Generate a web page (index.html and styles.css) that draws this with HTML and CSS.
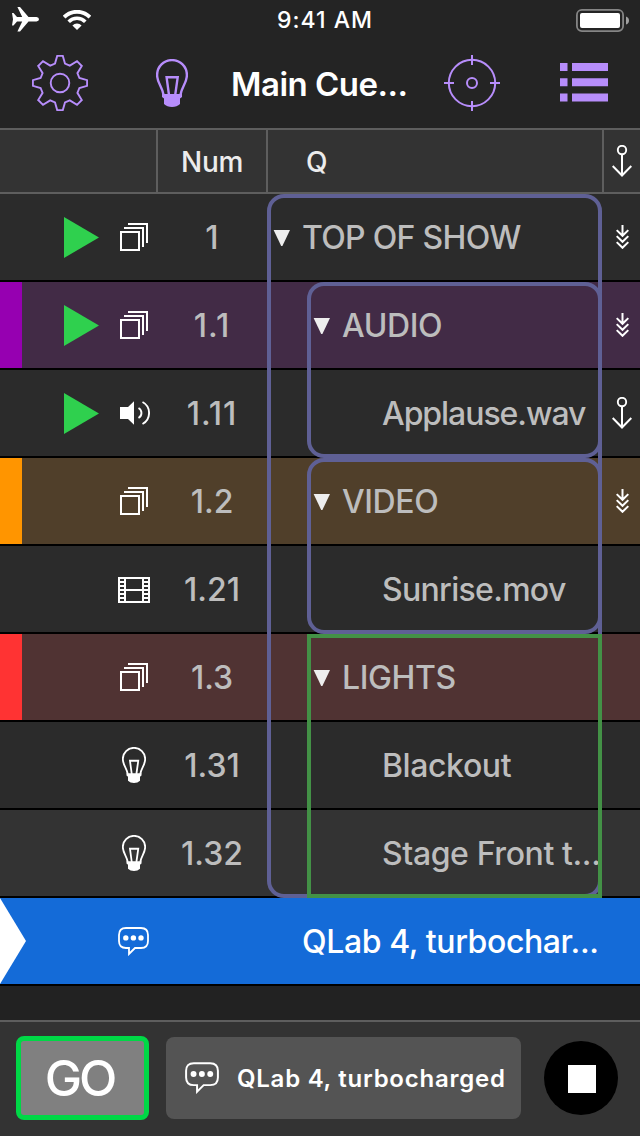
FILE: index.html
```
<!DOCTYPE html>
<html lang="en">
<head>
    <meta charset="utf-8">
    <title>Main Cue List</title>
    <link rel="stylesheet" href="styles.css">
</head>
<body>
    <!-- Icon shapes -->
    <svg class="icon-defs" width="0" height="0">
        <symbol id="icon-bulb" viewBox="0 0 32 48">
            <path d="M7.6 36C6.4 28 1.1 24 1.1 16a14.9 14.9 0 0 1 29.8 0C30.9 24 25.6 28 24.4 36" fill="none" stroke="currentColor" stroke-width="2.4"/>
            <path d="M13 36 10.6 18.3H21.7L19.2 36" fill="none" stroke="currentColor" stroke-width="2.4"/>
            <path d="M6 35h20v3l-2 1.5v5.5q-3 3-8 3t-8-3v-5.5l-2-1.5z" fill="currentColor"/>
        </symbol>
        <symbol id="icon-group" viewBox="0 0 28 28">
            <path d="M1 9h18v18H1zM4 5h19v19M8 1h19v19" fill="none" stroke="currentColor" stroke-width="2"/>
        </symbol>
        <symbol id="icon-audio" viewBox="0 0 30 24">
            <path d="M0 6h8l6-5.7v23.4L8 18H0z" fill="currentColor"/>
            <path d="M18.5 7a5.7 5.7 0 0 1 0 10M22.5 1a12.5 12.5 0 0 1 0 22" fill="none" stroke="currentColor" stroke-width="1.9"/>
        </symbol>
        <symbol id="icon-video" viewBox="0 0 32 26">
            <path d="M1 1h30v24H1zM7 1v24M25 1v24M7 13h18M2 5h4M2 9h4M2 13h4M2 17h4M2 21h4M26 5h4M26 9h4M26 13h4M26 17h4M26 21h4" fill="none" stroke="currentColor" stroke-width="2"/>
        </symbol>
        <symbol id="icon-memo" viewBox="0 0 31 29">
            <path d="M8 1h15q7 0 7 7v6q0 7-7 7h-6l-6 6v-6H8q-7 0-7-7V8q0-7 7-7z" fill="none" stroke="currentColor" stroke-width="1.8"/>
            <circle cx="7.8" cy="10.9" r="2.7" fill="currentColor"/>
            <circle cx="15.4" cy="10.9" r="2.7" fill="currentColor"/>
            <circle cx="23" cy="10.9" r="2.7" fill="currentColor"/>
        </symbol>
        <symbol id="icon-continue" viewBox="0 0 20 32">
            <path d="M10 9v21M.7 21l9.3 9.5 9.3-9.5" fill="none" stroke="currentColor" stroke-width="2"/>
            <circle cx="10" cy="5" r="4.2" fill="none" stroke="currentColor" stroke-width="1.9"/>
        </symbol>
        <symbol id="icon-follow" viewBox="0 0 13 24">
            <path d="M6.5 0v11M.7 5.1l5.8 5.7 5.8-5.7M.7 11.1l5.8 5.7 5.8-5.7M.7 17.1l5.8 5.7 5.8-5.7" fill="none" stroke="currentColor" stroke-width="2"/>
        </symbol>
        <symbol id="icon-play" viewBox="0 0 35 41">
            <path d="M0 0l35 20.5L0 41z" fill="currentColor"/>
        </symbol>
        <symbol id="icon-open" viewBox="0 0 17 16">
            <path d="M.6 0H17L9.4 16H8.200z" fill="currentColor"/>
        </symbol>
    </svg>

    <div class="status-bar">
        <div class="status-left">
            <svg width="27" height="25" viewBox="0 0 27 25" fill="#fff">
                <path d="M0 6h1.5L5 10h5.2L5.4 0H8l8.5 10h8q2.5.4 2.5 2.3t-2.5 2.3h-8L8 24.6H5.4L10.2 14.6H5l-3.5 4H0l1-6.3z"/>
            </svg>
            <svg width="28" height="20" viewBox="0 0 28 20" fill="none" stroke="#fff">
                <path d="M1.1 7.1a18.2 18.2 0 0 1 25.8 0" stroke-width="3.8"/>
                <path d="M5.7 11.7a11.7 11.7 0 0 1 16.6 0" stroke-width="3.6"/>
                <path d="M14 20l-4.6-4.6a6.5 6.5 0 0 1 9.2 0z" fill="#fff" stroke="none"/>
            </svg>
        </div>
        <span class="status-time">9:41 AM</span>
        <svg class="battery" width="53" height="23" viewBox="0 0 53 23">
            <rect x=".9" y=".9" width="46.2" height="21.2" rx="5" fill="none" stroke="#858585" stroke-width="1.8"/>
            <rect x="4" y="4" width="40" height="15" rx="2" fill="#fff"/>
            <path d="M50 7.5q3 1 3 4t-3 4z" fill="#a0a0a0"/>
        </svg>
    </div>

    <div class="nav-bar">
        <svg class="nav-gear" width="56" height="56" viewBox="0 0 56 56" fill="none" stroke="currentColor" stroke-width="1.9">
            <path d="M25.2.9h5.6L33 8.6l4.8 2L45 6.2 49.8 11l-4.4 7.2 2 4.8 7.7 2.2v5.6L47.4 33l-2 4.8 4.4 7.2-4.8 4.8-7.2-4.4-4.8 2-2.2 7.7h-5.6L23 47.4l-4.8-2-7.2 4.4L6.2 45l4.4-7.2-2-4.8L.9 30.8v-5.6L8.6 23l2-4.8L6.2 11 11 6.2l7.2 4.4 4.8-2z"/>
            <circle cx="28" cy="28" r="9.3"/>
        </svg>
        <svg class="nav-bulb" width="32" height="48"><use href="#icon-bulb"/></svg>
        <h1 class="nav-title">Main Cue...</h1>
        <svg class="nav-target" width="56" height="56" viewBox="0 0 56 56" fill="none" stroke="currentColor" stroke-width="2">
            <circle cx="28" cy="28" r="23.2"/>
            <circle cx="28" cy="28" r="5"/>
            <path d="M28 0v10M28 46v10M0 28h10M46 28h10"/>
        </svg>
        <svg class="nav-list" width="48" height="39" viewBox="0 0 48 39" fill="currentColor">
            <path d="M0 0h7.5v8H0zM12 0h36v8H12zM0 15.2h7.5v8H0zM12 15.2h36v8H12zM0 30.4h7.5v8H0zM12 30.4h36v8H12z"/>
        </svg>
    </div>

    <div class="list-header">
        <div></div>
        <div class="header-num">Num</div>
        <div class="header-q">Q</div>
        <div class="follow"><svg width="20" height="32"><use href="#icon-continue"/></svg></div>
    </div>

    <div class="cue-list">
        <div class="cue row-1">
            <div class="run"><svg width="35" height="41"><use href="#icon-play"/></svg></div>
            <div class="type"><svg width="28" height="28"><use href="#icon-group"/></svg></div>
            <div class="num">1</div>
            <div class="name"><svg class="open" width="17" height="16"><use href="#icon-open"/></svg><span class="tight">TOP OF SHOW</span></div>
            <div class="follow"><svg width="13" height="24"><use href="#icon-follow"/></svg></div>
        </div>
        <div class="cue row-2 purple">
            <div class="run"><svg width="35" height="41"><use href="#icon-play"/></svg></div>
            <div class="type"><svg width="28" height="28"><use href="#icon-group"/></svg></div>
            <div class="num loose">1.1</div>
            <div class="name level-1"><svg class="open" width="17" height="16"><use href="#icon-open"/></svg><span>AUDIO</span></div>
            <div class="follow"><svg width="13" height="24"><use href="#icon-follow"/></svg></div>
        </div>
        <div class="cue row-3">
            <div class="run"><svg width="35" height="41"><use href="#icon-play"/></svg></div>
            <div class="type"><svg class="speaker" width="30" height="24"><use href="#icon-audio"/></svg></div>
            <div class="num loose">1.11</div>
            <div class="name level-2"><span class="tighter">Applause.wav</span></div>
            <div class="follow"><svg width="20" height="32"><use href="#icon-continue"/></svg></div>
        </div>
        <div class="cue row-4 orange">
            <div class="run"></div>
            <div class="type"><svg width="28" height="28"><use href="#icon-group"/></svg></div>
            <div class="num">1.2</div>
            <div class="name level-1"><svg class="open" width="17" height="16"><use href="#icon-open"/></svg><span>VIDEO</span></div>
            <div class="follow"><svg width="13" height="24"><use href="#icon-follow"/></svg></div>
        </div>
        <div class="cue row-5">
            <div class="run"></div>
            <div class="type"><svg class="film" width="32" height="26"><use href="#icon-video"/></svg></div>
            <div class="num">1.21</div>
            <div class="name level-2"><span class="tight">Sunrise.mov</span></div>
            <div class="follow"></div>
        </div>
        <div class="cue row-6 red">
            <div class="run"></div>
            <div class="type"><svg width="28" height="28"><use href="#icon-group"/></svg></div>
            <div class="num">1.3</div>
            <div class="name level-1"><svg class="open" width="17" height="16"><use href="#icon-open"/></svg><span>LIGHTS</span></div>
            <div class="follow"></div>
        </div>
        <div class="cue row-7">
            <div class="run"></div>
            <div class="type"><svg width="24" height="36"><use href="#icon-bulb"/></svg></div>
            <div class="num">1.31</div>
            <div class="name level-2"><span>Blackout</span></div>
            <div class="follow"></div>
        </div>
        <div class="cue row-8 light">
            <div class="run"></div>
            <div class="type"><svg width="24" height="36"><use href="#icon-bulb"/></svg></div>
            <div class="num">1.32</div>
            <div class="name level-2"><span>Stage Front t...</span></div>
            <div class="follow"></div>
        </div>
        <div class="cue row-9 selected">
            <svg class="playhead" width="26" height="86" viewBox="0 0 26 86" fill="#fff"><path d="M0 0l26 43L0 86z"/></svg>
            <div class="type"><svg class="memo" width="31" height="29"><use href="#icon-memo"/></svg></div>
            <div class="num"></div>
            <div class="name no-arrow"><span>QLab 4, turbochar...</span></div>
            <div class="follow"></div>
        </div>

        <!-- Group outlines -->
        <div class="group group-show"></div>
        <div class="group group-audio"></div>
        <div class="group group-video"></div>
        <div class="group group-lights"></div>
    </div>

    <div class="toolbar">
        <button class="go-btn">GO</button>
        <div class="standby">
            <svg width="34" height="32"><use href="#icon-memo"/></svg>
            <span>QLab 4, turbocharged</span>
        </div>
        <button class="stop-btn"><svg width="28" height="28" viewBox="0 0 28 28"><rect width="28" height="28" fill="#fff"/></svg></button>
    </div>
</body>
</html>
```
FILE: styles.css
```
:root {
    --accent: #b78dfb;
    --line: #5e5e5e;
    --group: #5f6095;
    --text: #bdbdbd;
}

* {
    margin: 0;
    padding: 0;
    box-sizing: border-box;
}

body {
    width: 640px;
    height: 1136px;
    display: flex;
    flex-direction: column;
    overflow: hidden;
    background-color: #222222;
    color: #fff;
    font-family: Inter, "Liberation Sans", sans-serif;
}

svg {
    display: block;
    flex-shrink: 0;
}

.icon-defs {
    position: absolute;
}

/* ========== Status Bar ========== */
.status-bar {
    height: 40px;
    display: grid;
    grid-template-columns: 1fr auto 1fr;
    padding: 0 11px 0 12px;
    background-color: #242424;
}

.status-left {
    display: flex;
    align-items: flex-start;
    gap: 24px;
    padding-top: 7px;
}

.status-left svg + svg {
    margin-top: 3px;
}

.status-time {
    padding-left: 9px;
    line-height: 40px;
    font-size: 23px;
    font-weight: 500;
    letter-spacing: 1px;
}

.battery {
    justify-self: end;
    margin-top: 9px;
}

/* ========== Nav Bar ========== */
.nav-bar {
    height: 88px;
    display: flex;
    align-items: center;
    padding: 0 32px 2px;
    background-color: #242424;
    color: var(--accent);
}

.nav-bulb {
    margin-left: 68px;
}

.nav-title {
    width: 213px;
    margin-left: 43px;
    padding-top: 2px;
    color: #fff;
    font-size: 33px;
    font-weight: 600;
    line-height: 44px;
    letter-spacing: -0.5px;
    white-space: nowrap;
}

.nav-list {
    margin: -1px 0 0 60px;
}

/* ========== Cue List Header ========== */
.list-header {
    height: 66px;
    display: grid;
    grid-template-columns: 158px 110px 336px 36px;
    border-top: 2px solid var(--line);
    border-bottom: 2px solid var(--line);
    background-color: #333333;
    color: #ececec;
    font-size: 28px;
    font-weight: 450;
    line-height: 64px;
}

.list-header > div {
    height: 62px;
}

.list-header > div:not(:last-child) {
    border-right: 2px solid var(--line);
}

.header-num {
    text-align: center;
    letter-spacing: -0.3px;
}

.header-q {
    padding-left: 38px;
}

/* ========== Cue List ========== */
.cue-list {
    display: grid;
    grid-template-columns: 267px 40px 295px 38px;
    grid-template-rows: repeat(9, 88px);
}

.cue {
    grid-column: 1 / -1;
    display: grid;
    grid-template-columns: 112px 44px 111px 337px 36px;
    align-items: center;
    border-bottom: 2px solid #000;
    background-color: #2b2b2b;
    color: var(--text);
    font-size: 32px;
    font-weight: 450;
    letter-spacing: -0.4px;
    white-space: nowrap;
}

.row-1 { grid-row: 1; }
.row-2 { grid-row: 2; }
.row-3 { grid-row: 3; }
.row-4 { grid-row: 4; }
.row-5 { grid-row: 5; }
.row-6 { grid-row: 6; }
.row-7 { grid-row: 7; }
.row-8 { grid-row: 8; }
.row-9 { grid-row: 9; }

.purple .run,
.orange .run,
.red .run {
    border-left: 22px solid;
}

.purple { background-color: #422b46; }
.purple .run { border-color: #9600b1; }
.orange { background-color: #503f2a; }
.orange .run { border-color: #ff9500; }
.red { background-color: #503333; }
.red .run { border-color: #ff3333; }
.light { background-color: #333333; }
.selected { background-color: #146bd8; color: #fff; }

.run {
    height: 86px;
    display: flex;
    align-items: center;
    justify-content: flex-end;
    padding-right: 13px;
    color: #2fd04e;
}

.type,
.follow {
    display: flex;
    align-items: center;
    justify-content: center;
    color: #fff;
}

.film {
    margin-top: 2px;
}

.speaker {
    margin-left: 2px;
}

.memo {
    margin-right: 2px;
}

.num {
    padding-left: 1px;
    text-align: center;
    letter-spacing: 0;
}

.loose {
    letter-spacing: 1px;
}

.name {
    display: flex;
    align-items: center;
    padding-left: 6px;
}

.open {
    margin: 2px 12px 0 0;
    color: #eeeeee;
}

.tight {
    letter-spacing: -0.7px;
}

.tighter {
    letter-spacing: -1.05px;
}

.level-1 { padding-left: 46px; }
.level-2 { padding-left: 115px; }
.no-arrow { padding-left: 35px; }

/* ========== Group Outlines ========== */
.group {
    border: 4px solid var(--group);
    border-radius: 17px;
}

.group-show {
    grid-area: 1 / 1 / 9 / 4;
    margin-left: 267px;
}

.group-audio { grid-area: 2 / 3 / 4 / 4; }
.group-video { grid-area: 4 / 3 / 6 / 4; }

.group-lights {
    grid-area: 6 / 3 / 9 / 4;
    border-color: #439146;
    border-radius: 0;
}

/* ========== Toolbar ========== */
.toolbar {
    height: 116px;
    margin-top: auto;
    display: flex;
    align-items: center;
    padding: 0 22px 2px 16px;
    border-top: 2px solid var(--line);
    background-color: #333333;
}

.go-btn {
    width: 133px;
    height: 84px;
    padding-right: 6px;
    border: 5px solid #00d846;
    border-radius: 8px;
    background-color: #808080;
    color: #fff;
    font: 500 50px/74px Inter, sans-serif;
    letter-spacing: -3px;
}

.standby {
    width: 355px;
    height: 82px;
    display: flex;
    align-items: center;
    gap: 18px;
    margin-left: 17px;
    padding-left: 19px;
    border-radius: 8px;
    background-color: #545454;
    font-size: 24px;
    font-weight: 600;
    letter-spacing: 0.75px;
    white-space: nowrap;
}

.stop-btn {
    width: 74px;
    height: 74px;
    display: flex;
    align-items: center;
    justify-content: center;
    margin-left: 23px;
    padding: 2px 0 0 2px;
    border: none;
    border-radius: 50%;
    background-color: #000;
}
```
